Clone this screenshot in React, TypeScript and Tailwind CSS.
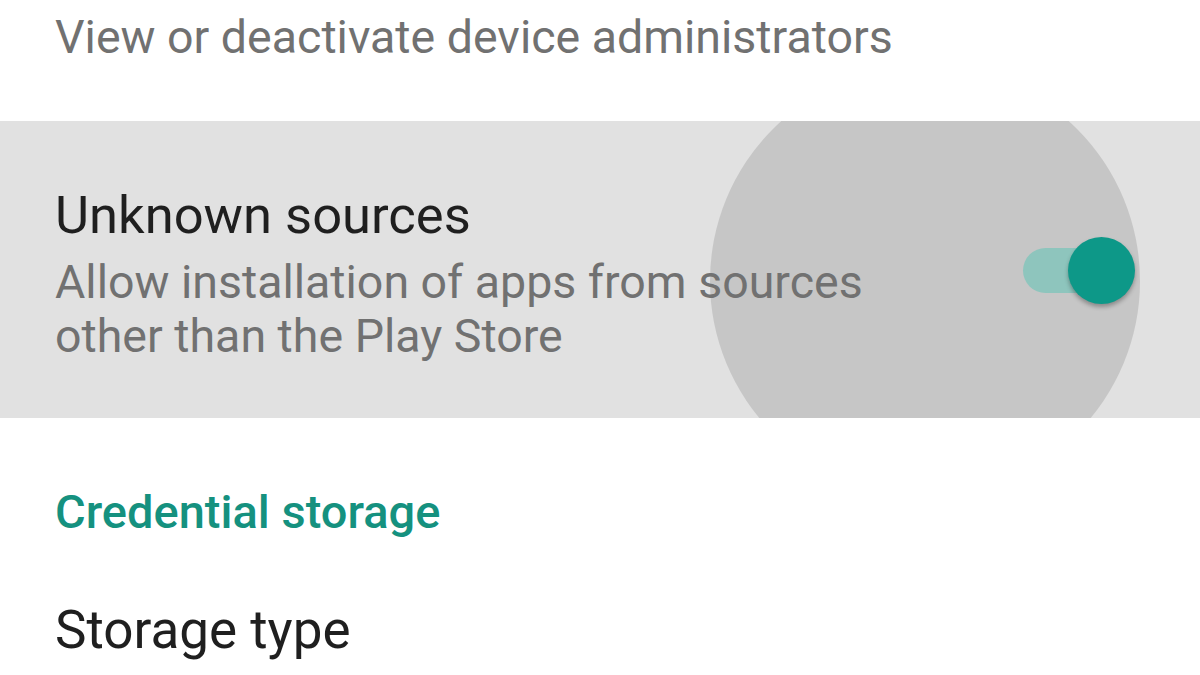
export default function App() {
  return (
    <div
      className="w-[1200px] h-[675px] overflow-hidden bg-white"
      style={{ fontFamily: 'Roboto, "Noto Sans", sans-serif' }}
    >
      {/* Previous item (summary only visible) */}
      <div className="h-[121px] pl-[55px] pt-[9px]">
        <p className="text-[46.5px] leading-[56px] text-[#717171]">View or deactivate device administrators</p>
      </div>

      {/* Unknown sources row, pressed state */}
      <div className="relative h-[297px] overflow-hidden bg-[#e1e1e1]">
        {/* Ripple */}
        <div className="absolute left-[710px] top-[-55px] h-[430px] w-[430px] rounded-full bg-[#c6c6c6]" />

        <div className="relative flex h-full items-start pl-[55px] pr-[65px] pt-[64px]">
          <div className="flex-1">
            <p className="text-[52.5px] leading-[60px] text-[#1f1f1f]">Unknown sources</p>
            <p className="mt-[10px] text-[46.5px] leading-[54px] text-[#717171]">
              Allow installation of apps from sources
              <br />
              other than the Play Store
            </p>
          </div>

          {/* Switch */}
          <div className="relative mt-[52px] h-[67px] w-[112px]">
            <div className="absolute left-0 top-[11px] h-[45px] w-[80px] rounded-full bg-[#8ec5bd]" />
            <div className="absolute right-0 top-0 h-[67px] w-[67px] rounded-full bg-[#0d9888] shadow-[0_3px_4px_rgba(0,0,0,0.3)]" />
          </div>
        </div>
      </div>

      {/* Credential storage header */}
      <div className="pl-[55px] pt-[66px]">
        <p className="text-[47px] font-medium leading-[56px] text-[#15917f]">Credential storage</p>
      </div>

      <div className="pl-[55px] pt-[60px]">
        <p className="text-[53px] leading-[60px] text-[#1f1f1f]">Storage type</p>
      </div>
    </div>
  )
}
